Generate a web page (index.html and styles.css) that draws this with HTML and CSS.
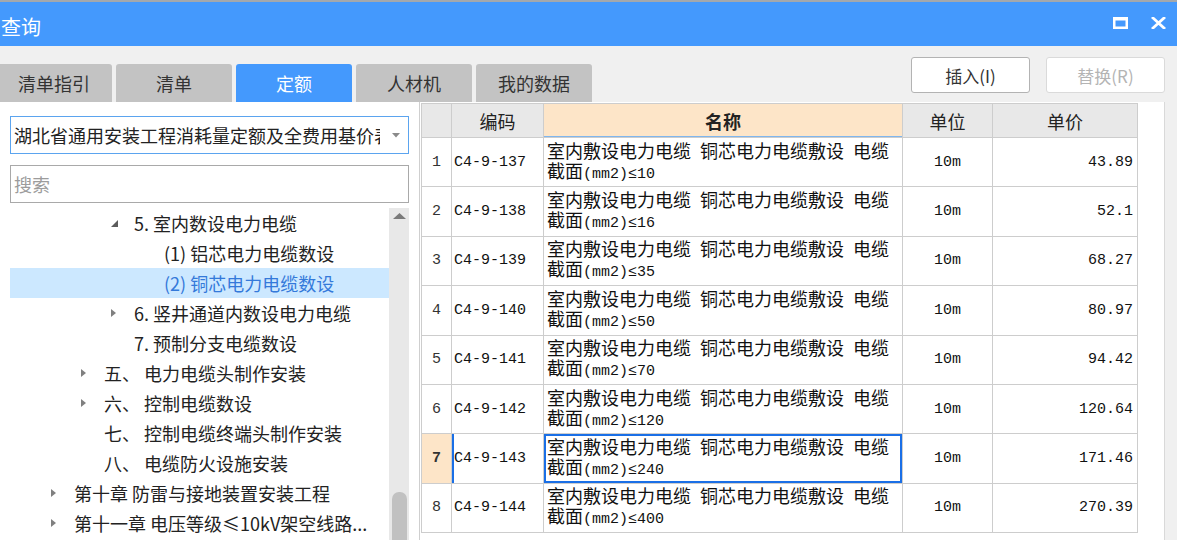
FILE: index.html
```html
<!DOCTYPE html>
<html lang="zh-CN">
<head>
<meta charset="utf-8">
<title>查询</title>
<link rel="stylesheet" href="styles.css">
</head>
<body>
<div class="window">
  <header class="titlebar">
    <span class="title">查询</span>
    <div class="winctl">
      <svg class="ico" width="15" height="12" viewBox="0 0 15 12"><rect x="1.25" y="1.5" width="12.5" height="9.25" fill="none" stroke="#fff" stroke-width="2.5"/><rect x="0" y="0" width="15" height="3.5" fill="#fff"/></svg>
      <svg class="ico" width="15" height="12" viewBox="0 0 15 12"><path d="M2 1 L13 11 M13 1 L2 11" stroke="#fff" stroke-width="2.8" stroke-linecap="square"/></svg>
    </div>
  </header>

  <div class="toolbar">
    <nav class="tabs">
      <div class="tab">清单指引</div>
      <div class="tab">清单</div>
      <div class="tab active">定额</div>
      <div class="tab">人材机</div>
      <div class="tab">我的数据</div>
    </nav>
    <div class="actions">
      <button class="btn">插入(I)</button>
      <button class="btn disabled">替换(R)</button>
    </div>
  </div>

  <div class="main">
    <aside class="left">
      <div class="combo">
        <span class="combo-text">湖北省通用安装工程消耗量定额及全费用基价表</span>
        <svg class="drop" width="8" height="5" viewBox="0 0 8 5"><path d="M0 0 H8 L4 4.5Z" fill="#8a8a8a"/></svg>
      </div>
      <div class="search">搜索</div>
      <div class="treewrap">
        <ul class="tree">
          <li class="l2"><span class="slot"><svg width="9" height="9" viewBox="0 0 9 9"><path d="M8 1 V8 H1Z" fill="#5c5c5c"/></svg></span>5. 室内数设电力电缆</li>
          <li class="l3"><span class="slot"></span>(1) 铝芯电力电缆数设</li>
          <li class="l3 selected"><span class="slot"></span>(2) 铜芯电力电缆数设</li>
          <li class="l2"><span class="slot"><svg width="7" height="10" viewBox="0 0 7 10"><path d="M1 1 L6 5 L1 9Z" fill="#808080"/></svg></span>6. 竖井通道内数设电力电缆</li>
          <li class="l2"><span class="slot"></span>7. 预制分支电缆数设</li>
          <li class="l1"><span class="slot"><svg width="7" height="10" viewBox="0 0 7 10"><path d="M1 1 L6 5 L1 9Z" fill="#808080"/></svg></span>五、 电力电缆头制作安装</li>
          <li class="l1"><span class="slot"><svg width="7" height="10" viewBox="0 0 7 10"><path d="M1 1 L6 5 L1 9Z" fill="#808080"/></svg></span>六、 控制电缆数设</li>
          <li class="l1"><span class="slot"></span>七、 控制电缆终端头制作安装</li>
          <li class="l1"><span class="slot"></span>八、 电缆防火设施安装</li>
          <li class="l0"><span class="slot"><svg width="7" height="10" viewBox="0 0 7 10"><path d="M1 1 L6 5 L1 9Z" fill="#808080"/></svg></span>第十章 防雷与接地装置安装工程</li>
          <li class="l0"><span class="slot"><svg width="7" height="10" viewBox="0 0 7 10"><path d="M1 1 L6 5 L1 9Z" fill="#808080"/></svg></span>第十一章 电压等级≤10kV架空线路...</li>
        </ul>
        <div class="vscroll">
          <svg class="up" width="13" height="6" viewBox="0 0 13 6"><path d="M0 6 L6.5 0 L13 6Z" fill="#7a7a7a"/></svg>
          <div class="thumb"></div>
        </div>
      </div>
    </aside>

    <section class="right">
      <div class="grid">
        <div class="c h idx"></div>
        <div class="c h">编码</div>
        <div class="c h hot">名称</div>
        <div class="c h">单位</div>
        <div class="c h">单价</div>

        <div class="c idx">1</div><div class="c code">C4-9-137</div><div class="c name"><span class="t">室内敷设电力电缆 铜芯电力电缆敷设 电缆截面<span class="a">(mm2)≤10</span></span></div><div class="c unit">10m</div><div class="c price">43.89</div>
        <div class="c idx">2</div><div class="c code">C4-9-138</div><div class="c name"><span class="t">室内敷设电力电缆 铜芯电力电缆敷设 电缆截面<span class="a">(mm2)≤16</span></span></div><div class="c unit">10m</div><div class="c price">52.1</div>
        <div class="c idx">3</div><div class="c code">C4-9-139</div><div class="c name"><span class="t">室内敷设电力电缆 铜芯电力电缆敷设 电缆截面<span class="a">(mm2)≤35</span></span></div><div class="c unit">10m</div><div class="c price">68.27</div>
        <div class="c idx">4</div><div class="c code">C4-9-140</div><div class="c name"><span class="t">室内敷设电力电缆 铜芯电力电缆敷设 电缆截面<span class="a">(mm2)≤50</span></span></div><div class="c unit">10m</div><div class="c price">80.97</div>
        <div class="c idx">5</div><div class="c code">C4-9-141</div><div class="c name"><span class="t">室内敷设电力电缆 铜芯电力电缆敷设 电缆截面<span class="a">(mm2)≤70</span></span></div><div class="c unit">10m</div><div class="c price">94.42</div>
        <div class="c idx">6</div><div class="c code">C4-9-142</div><div class="c name"><span class="t">室内敷设电力电缆 铜芯电力电缆敷设 电缆截面<span class="a">(mm2)≤120</span></span></div><div class="c unit">10m</div><div class="c price">120.64</div>
        <div class="c idx mark">7</div><div class="c code cur">C4-9-143</div><div class="c name sel"><span class="t">室内敷设电力电缆 铜芯电力电缆敷设 电缆截面<span class="a">(mm2)≤240</span></span></div><div class="c unit">10m</div><div class="c price">171.46</div>
        <div class="c idx">8</div><div class="c code">C4-9-144</div><div class="c name"><span class="t">室内敷设电力电缆 铜芯电力电缆敷设 电缆截面<span class="a">(mm2)≤400</span></span></div><div class="c unit">10m</div><div class="c price">270.39</div>
      </div>
    </section>
  </div>
</div>
</body>
</html>
```

FILE: styles.css
```css
* { box-sizing: border-box; }

html, body {
  margin: 0;
  padding: 0;
}

body {
  width: 1177px;
  height: 540px;
  overflow: hidden;
  background: #f0f0f0;
  font-family: "Noto Sans CJK SC", "Microsoft YaHei", sans-serif;
  color: #222;
}

.titlebar {
  height: 46px;
  border-top: 2px solid #a3a8ad;
  background: #4499fd;
  display: flex;
  align-items: center;
  color: #fff;
}

.title {
  font-size: 20px;
  line-height: 20px;
  margin-left: 1px;
  margin-top: 6px;
}

.winctl {
  margin-left: auto;
  margin-right: 11px;
  display: flex;
  gap: 23px;
  margin-top: -2px;
}

.ico { display: block; }

.toolbar {
  height: 56px;
  display: flex;
  justify-content: space-between;
}

.tabs {
  display: flex;
  gap: 4px;
  margin-left: -4px;
  align-self: flex-end;
}

.tab {
  width: 116px;
  height: 38px;
  background: #c3c3c3;
  border-radius: 3px 3px 0 0;
  display: flex;
  align-items: center;
  justify-content: center;
  font-size: 18px;
  color: #333;
}

.tab.active {
  background: #4499fd;
  color: #fff;
}

.actions {
  display: flex;
  gap: 16px;
  margin-top: 11px;
  margin-right: 12px;
  align-self: flex-start;
}

.btn {
  width: 119px;
  height: 36px;
  background: #fff;
  border: 1px solid #b3b3b3;
  border-radius: 3px;
  font-family: "Noto Sans CJK SC", sans-serif;
  font-size: 17px;
  color: #333;
  padding: 0;
}

.btn.disabled {
  color: #b4b4b4;
  border-color: #dadada;
}

.main {
  display: flex;
  height: 438px;
}

.left {
  width: 419px;
  background: #fff;
  padding: 14px 0 0 10px;
}

.combo {
  width: 399px;
  height: 38px;
  border: 1px solid #5ba4ef;
  display: flex;
  align-items: center;
  padding-left: 3px;
  font-size: 18px;
  color: #222;
}

.combo-text {
  width: 366px;
  white-space: nowrap;
  overflow: hidden;
}

.drop {
  margin-left: auto;
  margin-right: 8px;
}

.search {
  margin-top: 11px;
  width: 399px;
  height: 38px;
  border: 1px solid #a9a9a9;
  padding-left: 3px;
  display: flex;
  align-items: center;
  font-size: 18px;
  color: #9c9c9c;
}

.treewrap {
  margin-top: 5px;
  width: 399px;
  height: 332px;
  display: flex;
}

.tree {
  list-style: none;
  margin: 0;
  padding: 0;
  width: 379px;
}

.tree li {
  height: 30px;
  display: flex;
  align-items: center;
  font-size: 18px;
  color: #222;
  white-space: nowrap;
  overflow: hidden;
}

.tree .slot {
  width: 24px;
  flex: none;
  display: flex;
  align-items: center;
}

.tree .slot svg { display: block; }

.tree .l0 { padding-left: 40px; }
.tree .l1 { padding-left: 70px; }
.tree .l2 { padding-left: 100px; }
.tree .l3 { padding-left: 130px; }

.tree li.selected {
  background: #cce8ff;
  color: #3479da;
}

.vscroll {
  width: 20px;
  background: #e8e8e8;
  display: flex;
  flex-direction: column;
  align-items: center;
}

.vscroll .up {
  display: block;
  margin-top: 5px;
}

.thumb {
  margin-top: auto;
  width: 15px;
  height: 48px;
  background: #c1c1c1;
  border-radius: 7px 7px 0 0;
}

.right {
  width: 746px;
  background: #fff;
  border-left: 1px solid #cfcfcf;
  border-right: 1px solid #d9d9d9;
  padding: 1px 0 0 1px;
}

.grid {
  display: grid;
  grid-template-columns: 31px 92px 359px 90px 145px;
  grid-template-rows: 35px repeat(8, 49.4px);
}

.c {
  border-right: 1px solid #cdcdcd;
  border-bottom: 1px solid #cdcdcd;
  display: flex;
  align-items: center;
  font-family: "Liberation Mono", monospace;
  font-size: 15px;
  color: #111;
  overflow: hidden;
}

.c.h {
  background: #e8e8e8;
  border-top: 1px solid #cdcdcd;
  justify-content: center;
  font-family: "Noto Sans CJK SC", sans-serif;
  font-size: 18px;
  color: #222;
}

.c.h.hot {
  background: #fde5c8;
  font-weight: bold;
  box-shadow: inset 0 -1px 0 #7fb6ee;
}

.c.idx {
  border-left: 1px solid #cdcdcd;
  justify-content: center;
  color: #333;
}

.c.idx.mark {
  background: #fde5c8;
  font-weight: bold;
}

.c.code { padding-left: 2px; }

.c.code.cur { box-shadow: inset 2px 0 0 #1a6fe6; }

.c.name {
  font-family: "Noto Sans CJK SC", sans-serif;
  font-size: 18px;
  line-height: 20px;
  word-spacing: 5px;
  padding: 0 8px 0 3px;
}

.c.name .t { display: block; }

.c.name .a {
  font-family: "Liberation Mono", monospace;
  font-size: 15px;
  word-spacing: 0;
}

.c.name.sel { box-shadow: inset 0 0 0 2px #1a6fe6; }

.c.unit { justify-content: center; }

.c.price {
  justify-content: flex-end;
  padding-right: 4px;
}
```
